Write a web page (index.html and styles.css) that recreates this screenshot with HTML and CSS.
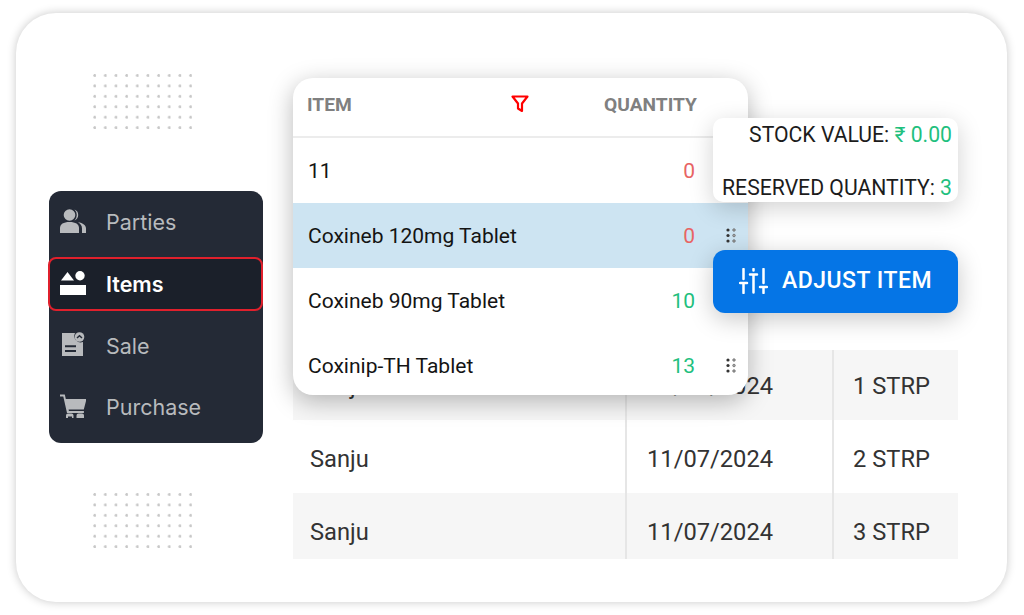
FILE: index.html
```html
<!DOCTYPE html>
<html lang="en">
<head>
<meta charset="utf-8">
<title>Items</title>
<link rel="stylesheet" href="styles.css">
</head>
<body>
<main class="card">
  <aside class="side">
    <div class="dots"></div>
    <nav class="menu">
      <a class="menu-item">
        <svg class="mi" viewBox="0 0 26 24"><circle cx="9.500" cy="6" r="5.800"/><path d="M0 24v-5c0-3.800 3.400-6 9.500-6s9.500 2.200 9.500 6v5z"/><path d="M14.500.6a5.800 5.800 0 0 1 0 10.800a7.500 7.500 0 0 0 0-10.800zM18 13.300c5 .8 8 2.800 8 6.200v4.500h-4v-4.500c0-2.600-1.300-4.600-4-6.200z"/></svg>
        <span>Parties</span>
      </a>
      <a class="menu-item active">
        <svg class="mi" viewBox="0 0 26 24"><path d="M7.500 1l6.500 8.500H1z"/><circle cx="20" cy="4.800" r="4.700"/><rect x="0" y="14" width="26" height="10"/></svg>
        <span>Items</span>
      </a>
      <a class="menu-item">
        <svg class="mi" viewBox="0 0 26 24"><path fill-rule="evenodd" d="M2 1h13a6.500 6.500 0 0 0 8 9v14H2zM5 13.200v2h11v-2zM5 18v2h11v-2z"/><circle cx="19.500" cy="5" r="4.800"/><path class="chev" d="M17 6l2.500-2.200L22 6"/></svg>
        <span>Sale</span>
      </a>
      <a class="menu-item">
        <svg class="mi" viewBox="0 0 26 24"><path d="M0 .5h4.800l1 4.500H26.500l-2.700 10.500H8.600l.3 1.500h15v2H7L3.300 2.500H0z"/><path d="M6 24v-2.500a2 2 0 0 1 2-2h3.500a2 2 0 0 1 2 2V24h-1.500v-1.500h-4V24zM16.500 24v-2.500a2 2 0 0 1 2-2h3.500a2 2 0 0 1 2 2V24z"/></svg>
        <span>Purchase</span>
      </a>
    </nav>
    <div class="dots"></div>
  </aside>

  <section class="content">
    <table class="sales">
      <tr><td>Sanju</td><td>11/07/2024</td><td>1 STRP</td></tr>
      <tr><td>Sanju</td><td>11/07/2024</td><td>2 STRP</td></tr>
      <tr><td>Sanju</td><td>11/07/2024</td><td>3 STRP</td></tr>
    </table>

    <div class="popup">
      <div class="popup-head">
        <span class="ph-item">ITEM</span>
        <svg class="funnel" viewBox="0 0 18 18"><path d="M1.500 1.500h15L11 8.500v7.500l-4-2.500v-5z" fill="none" stroke="#ff0000" stroke-width="2.200" stroke-linejoin="round"/></svg>
        <span class="ph-qty">QUANTITY</span>
      </div>
      <div class="row"><span class="name">11</span><span class="qty red">0</span><span class="grip"></span></div>
      <div class="row selected"><span class="name">Coxineb 120mg Tablet</span><span class="qty red">0</span>
        <svg class="grip" viewBox="0 0 11 15"><g class="g-l"><circle cx="2" cy="2" r="1.600"/><circle cx="2" cy="7.500" r="1.600"/><circle cx="2" cy="13" r="1.600"/></g><g class="g-r"><circle cx="8" cy="2" r="1.300"/><circle cx="8" cy="7.500" r="1.300"/><circle cx="8" cy="13" r="1.300"/></g></svg>
      </div>
      <div class="row"><span class="name">Coxineb 90mg Tablet</span><span class="qty green">10</span><span class="grip"></span></div>
      <div class="row"><span class="name">Coxinip-TH Tablet</span><span class="qty green">13</span>
        <svg class="grip" viewBox="0 0 11 15"><g class="g-l"><circle cx="2" cy="2" r="1.600"/><circle cx="2" cy="7.500" r="1.600"/><circle cx="2" cy="13" r="1.600"/></g><g class="g-r"><circle cx="8" cy="2" r="1.300"/><circle cx="8" cy="7.500" r="1.300"/><circle cx="8" cy="13" r="1.300"/></g></svg>
      </div>
    </div>

    <div class="tip">
      <p>STOCK VALUE: <b>₹ 0.00</b></p>
      <p>RESERVED QUANTITY: <b>3</b></p>
    </div>

    <div class="adjust">
      <svg viewBox="0 0 29 26" class="adjust-icon"><path d="M4.500 1v10M1 15h7M4.500 15v10M14.500 1v1.500M11 6.500h7M14.500 6.500v18M24.500 1v14M21 19h7M24.500 19v6" fill="none" stroke="#fff" stroke-width="2.500" stroke-linecap="round"/></svg>
      <span>ADJUST ITEM</span>
    </div>
  </section>
</main>
</body>
</html>
```

FILE: styles.css
```css
* { box-sizing: border-box; }
html, body { margin: 0; padding: 0; background: #fff; }
body {
  width: 1024px;
  height: 615px;
  overflow: hidden;
  padding: 13px 17px 13px 16px;
  font-family: Roboto, "Liberation Sans", sans-serif;
}
.card {
  width: 991px;
  height: 589px;
  background: #fff;
  border-radius: 40px;
  box-shadow: 0 0 10px rgba(0,0,0,.22);
  display: flex;
  padding: 0 49px 0 33px;
  gap: 30px;
}
.side {
  width: 214px;
  padding-top: 61px;
  display: flex;
  flex-direction: column;
  align-items: flex-start;
  flex: none;
}
.dots {
  width: 99px;
  height: 55px;
  margin-left: 44px;
  background-image: radial-gradient(circle at 1.700px 1.500px, #c8c8c8 1.100px, transparent 1.700px);
  background-size: 10.670px 10.440px;
}
.menu {
  width: 214px;
  height: 252px;
  margin: 62px 0 50px;
  background: #242a36;
  border-radius: 12px;
  display: flex;
  flex-direction: column;
}
.menu-item {
  height: 62px;
  display: flex;
  align-items: center;
  gap: 20px;
  padding-left: 11px;
  color: #b8babd;
  font-family: Inter, Roboto, sans-serif;
  font-size: 21.500px;
  flex: none;
}
.menu-item:nth-child(3) { height: 61px; }
.menu-item .mi { width: 26px; height: 24px; fill: #b8babd; flex: none; margin-bottom: 3px; }
.menu-item .chev { fill: none; stroke: #242a36; stroke-width: 1.500; }
.menu-item.active {
  height: 54px;
  width: 215px;
  margin: 4px 0 4px -1px;
  background: #1b202a;
  border: 2px solid #e0202c;
  border-radius: 8px;
  color: #fff;
  font-weight: 600;
  padding-left: 10px;
}
.menu-item.active .mi { fill: #fff; }
.content {
  position: relative;
  flex: 1;
  padding-top: 337px;
}
.sales {
  width: 665px;
  border-collapse: separate;
  border-spacing: 0;
  table-layout: fixed;
  font-size: 23.700px;
  line-height: 28px;
  color: #333;
}
.sales td {
  padding: 25px 0 0 20px;
  height: 73px;
  vertical-align: top;
  border-left: 2px solid #e6e6e6;
}
.sales td:first-child { width: 332px; padding-left: 17px; border-left: 0; }
.sales td:nth-child(2) { width: 207px; }
.sales td:nth-child(3) { padding-left: 19px; }
.sales tr:nth-child(odd) td { background: #f6f6f6; }
.sales tr:first-child td { height: 70px; padding-top: 22px; }
.sales tr:last-child td { height: 66px; }
.popup {
  position: absolute;
  left: 0;
  top: 65px;
  width: 455px;
  height: 317px;
  background: #fff;
  border-radius: 20px;
  box-shadow: 0 6px 24px rgba(0,0,0,.28);
  overflow: hidden;
}
.popup-head {
  height: 60px;
  display: flex;
  align-items: center;
  padding: 0 0 6px 14px;
  border-bottom: 2px solid #ececec;
  color: #808080;
  font-size: 19.200px;
  font-weight: 700;
}
.ph-item { width: 204px; }
.funnel { width: 18px; height: 18px; flex: none; }
.ph-qty { margin-left: 75px; }
.row {
  height: 65px;
  display: flex;
  align-items: center;
  padding-left: 15px;
  font-size: 21px;
  color: #141414;
}
.row.selected { background: #cde4f2; }
.name { flex: 1; }
.qty { width: 60px; text-align: right; margin-right: 31px; }
.red { color: #e86464; }
.green { color: #1fc07e; }
.grip {
  width: 11px;
  height: 15px;
  margin-right: 11px;
  flex: none;
}
.g-l { fill: #333; }
.g-r { fill: #a8a8a8; stroke: #555; stroke-width: .6; }
.tip {
  position: absolute;
  left: 420px;
  top: 105px;
  width: 245px;
  height: 84px;
  background: #fff;
  border-radius: 10px;
  box-shadow: 0 6px 24px rgba(0,0,0,.18);
  padding: 5px 6px 0 0;
  text-align: right;
  font-size: 21.200px;
  color: #1c1c1c;
}
.tip p { margin: 0 0 29px; line-height: 24px; }
.tip b { font-weight: 400; color: #1fc07e; }
.adjust {
  position: absolute;
  left: 420px;
  top: 237px;
  width: 245px;
  height: 63px;
  background: #0575e6;
  border-radius: 12px;
  box-shadow: 0 6px 24px rgba(0,0,0,.22);
  display: flex;
  align-items: center;
  gap: 14px;
  padding: 0 0 2px 26px;
  color: #fff;
  font-size: 23px;
  font-weight: 500;
  letter-spacing: .5px;
}
.adjust-icon { width: 29px; height: 26px; flex: none; }
```
